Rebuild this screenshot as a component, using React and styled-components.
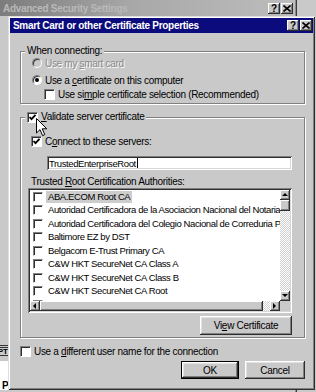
import React from 'react';
import styled, { createGlobalStyle } from 'styled-components';

const FACE = '#c9c9c9';

const GlobalStyle = createGlobalStyle`
  html, body {
    margin: 0;
    padding: 0;
  }

  body {
    width: 316px;
    height: 392px;
    overflow: hidden;
    background: ${FACE};
    font-family: "Liberation Sans", Arial, sans-serif;
    font-size: 10px;
    letter-spacing: -0.3px;
    color: #000;
  }
`;

const authorities = [
  'ABA.ECOM Root CA',
  'Autoridad Certificadora de la Asociacion Nacional del Notariado Mexicano',
  'Autoridad Certificadora del Colegio Nacional de Correduria Publica Mexicana',
  'Baltimore EZ by DST',
  'Belgacom E-Trust Primary CA',
  'C&W HKT SecureNet CA Class A',
  'C&W HKT SecureNet CA Class B',
  'C&W HKT SecureNet CA Root',
  'C&W HKT SecureNet CA SGC Root',
];

const CloseGlyph = () => (
  <svg width="8" height="7" viewBox="0 0 8 7">
    <path d="M0.5 0.5 L7.5 6.5 M7.5 0.5 L0.5 6.5" stroke="#000" strokeWidth="1.6" />
  </svg>
);

const Arrow = ({ dir }) => {
  const shapes = {
    up: '1,5 4,2 7,5',
    down: '1,2 4,5 7,2',
    left: '5,1 2,4 5,7',
    right: '2,1 5,4 2,7',
  };
  return (
    <svg width="8" height="8" viewBox="0 0 8 8">
      <polygon points={shapes[dir]} fill="#000" />
    </svg>
  );
};

const Check = () => (
  <svg width="9" height="9" viewBox="0 0 9 9">
    <path d="M1.5 4 L3.5 6.2 L7.5 1.8" stroke="#000" strokeWidth="1.8" fill="none" />
  </svg>
);

const App = () => {
  return (
    <Screen>
      <GlobalStyle />

      <BackWindow>
        <BackTitle>
          <span>Advanced Security Settings</span>
          <TitleButtons>
            <TitleButton>?</TitleButton>
            <TitleButton><CloseGlyph /></TitleButton>
          </TitleButtons>
        </BackTitle>
        <BackBody>
          <BackTab>PT</BackTab>
          <BackField>P</BackField>
        </BackBody>
      </BackWindow>

      <Dialog>
        <TitleBar>
          <span>Smart Card or other Certificate Properties</span>
          <TitleButtons>
            <TitleButton>?</TitleButton>
            <TitleButton><CloseGlyph /></TitleButton>
          </TitleButtons>
        </TitleBar>

        <Body>
          <Group $pad="0 12px 3px 10px">
            <Caption>When connecting:</Caption>
            <Row $indent={1}>
              <Radio $disabled />
              <Disabled>Use my <u>s</u>mart card</Disabled>
            </Row>
            <Row $indent={1} $top={5}>
              <Radio $checked />
              <span>Use a <u>c</u>ertificate on this computer</span>
            </Row>
            <Row $indent={13} $top={2}>
              <CheckBox />
              <span>Use si<u>m</u>ple certificate selection (Recommended)</span>
            </Row>
          </Group>

          <Group $pad="0 12px 2px 10px" $top={7}>
            <Caption>
              <CheckBox $checked><Check /></CheckBox>
              <span><u>V</u>alidate server certificate</span>
            </Caption>
            <Row $top={12}>
              <CheckBox $checked><Check /></CheckBox>
              <span>C<u>o</u>nnect to these servers:</span>
            </Row>
            <ServerInput>TrustedEnterpriseRoot<Caret /></ServerInput>
            <Row $top={5}>
              <span>Trusted <u>R</u>oot Certification Authorities:</span>
            </Row>

            <ListBox>
              <Items>
                {authorities.map((name, i) => (
                  <Item key={name}>
                    <CheckBox $small />
                    <ItemText $selected={i === 0}>{name}</ItemText>
                  </Item>
                ))}
              </Items>
              <VScroll>
                <ScrollButton><Arrow dir="up" /></ScrollButton>
                <Thumb $size={11} />
                <Track />
                <ScrollButton><Arrow dir="down" /></ScrollButton>
              </VScroll>
              <HScroll>
                <ScrollButton><Arrow dir="left" /></ScrollButton>
                <Thumb $size={223} />
                <Track />
                <ScrollButton><Arrow dir="right" /></ScrollButton>
              </HScroll>
              <Corner />
            </ListBox>

            <ButtonRow $top={3} $gap={0}>
              <Button $width={92} $height={19}>Vi<u>e</u>w Certificate</Button>
            </ButtonRow>
          </Group>

          <Row $indent={0} $top={7}>
            <CheckBox />
            <span>Use a <u>d</u>ifferent user name for the connection</span>
          </Row>

          <ButtonRow $top={4} $gap={6}>
            <Button $default $width={58} $height={18}>OK</Button>
            <Button $width={60} $height={18}>Cancel</Button>
          </ButtonRow>
        </Body>
      </Dialog>

      <Pointer width="12" height="20" viewBox="0 0 12 20">
        <path
          d="M0.5 0.5 L0.5 15 L4 11.6 L6.6 17.6 L8.8 16.6 L6.2 10.8 L10.8 10.8 Z"
          fill="#fff"
          stroke="#000"
          strokeWidth="1"
          strokeLinejoin="miter"
        />
      </Pointer>
    </Screen>
  );
};

const Screen = styled.div`
  position: relative;
  width: 316px;
  height: 392px;
  overflow: hidden;
  background: ${FACE};
`;

const BackWindow = styled.div`
  width: 297px;
  height: 392px;
  display: flex;
  flex-direction: column;
  background: ${FACE};
  box-shadow: inset -1px 0 #3c3c3c, inset -2px 0 #8a8a8a;
`;

const BackTitle = styled.div`
  height: 16px;
  margin-right: 2px;
  padding: 0 2px 0 3px;
  display: flex;
  align-items: center;
  justify-content: space-between;
  background: linear-gradient(to right, #7c7c7c, #a8a8a8 45%, #bdbdbd);
  color: #b9b9b9;
  font-weight: bold;
`;

const BackBody = styled.div`
  flex: 1;
  display: flex;
  flex-direction: column;
  justify-content: flex-end;
  padding-bottom: 2px;
`;

const BackTab = styled.div`
  width: 8px;
  margin-bottom: 5px;
  overflow: hidden;
  direction: rtl;
  border-top: 3px double #333;
  border-bottom: 1px solid #333;
  font-size: 8px;
  font-weight: bold;
  line-height: 7px;
  letter-spacing: 0;
`;

const BackField = styled.div`
  width: 20px;
  height: 29px;
  padding: 0 0 0 2px;
  display: flex;
  align-items: flex-end;
  background: #fff;
  font-weight: bold;
  font-size: 10px;
  line-height: 9px;
`;

const Dialog = styled.div`
  position: absolute;
  left: 8px;
  top: 16px;
  width: 307px;
  height: 374px;
  box-sizing: border-box;
  padding: 2px;
  display: flex;
  flex-direction: column;
  background: ${FACE};
  box-shadow:
    inset 1px 1px #dedede,
    inset -1px -1px #2e2e2e,
    inset 2px 2px #fff,
    inset -2px -2px #808080;
`;

const TitleBar = styled.div`
  height: 15px;
  padding: 0 1px 0 3px;
  display: flex;
  align-items: center;
  justify-content: space-between;
  background: #0b0b7d;
  color: #fff;
  font-weight: bold;
`;

const TitleButtons = styled.div`
  display: flex;
  gap: 1px;
`;

const TitleButton = styled.div`
  width: 12px;
  height: 11px;
  display: flex;
  align-items: center;
  justify-content: center;
  background: ${FACE};
  color: #000;
  font-size: 10px;
  font-weight: bold;
  letter-spacing: 0;
  box-shadow:
    inset -1px -1px #2e2e2e,
    inset 1px 1px #fff,
    inset -2px -2px #808080;
`;

const Body = styled.div`
  flex: 1;
  padding: 12px 8px 0 10px;
  display: flex;
  flex-direction: column;
`;

const Group = styled.fieldset`
  margin: ${(p) => p.$top || 0}px 0 0 0;
  padding: ${(p) => p.$pad};
  min-width: 0;
  display: flex;
  flex-direction: column;
  border: 1px solid #808080;
  box-shadow: 1px 1px 0 #fff, inset 1px 1px 0 #fff;
`;

const Caption = styled.legend`
  margin-left: -6px;
  padding: 0 2px;
  height: 12px;
  display: flex;
  align-items: center;
  gap: 3px;
  background: ${FACE};
  line-height: 12px;
`;

const Row = styled.div`
  height: 12px;
  margin-top: ${(p) => p.$top || 0}px;
  padding-left: ${(p) => p.$indent || 0}px;
  display: flex;
  align-items: center;
  gap: 3px;
  white-space: nowrap;
`;

const Disabled = styled.span`
  color: #8a8a8a;
  text-shadow: 1px 1px 0 #fff;
`;

const Radio = styled.div`
  position: relative;
  width: 10px;
  height: 10px;
  box-sizing: border-box;
  flex-shrink: 0;
  border-radius: 50%;
  border: 1px solid;
  border-color: #808080 #fff #fff #808080;
  background: ${(p) => (p.$disabled ? FACE : '#fff')};
  box-shadow: inset 1px 1px 0 #3a3a3a;

  &::after {
    content: '';
    display: ${(p) => (p.$checked ? 'block' : 'none')};
    position: absolute;
    left: 2px;
    top: 2px;
    width: 4px;
    height: 4px;
    border-radius: 50%;
    background: #000;
  }
`;

const CheckBox = styled.div`
  width: ${(p) => (p.$small ? 10 : 11)}px;
  height: ${(p) => (p.$small ? 10 : 11)}px;
  box-sizing: border-box;
  flex-shrink: 0;
  display: flex;
  align-items: center;
  justify-content: center;
  background: #fff;
  border: 1px solid;
  border-color: #808080 #fff #fff #808080;
  box-shadow: inset 1px 1px 0 #2e2e2e;
`;

const ServerInput = styled.div`
  height: 14px;
  margin: 9px 0 0 16px;
  padding: 0 2px;
  box-sizing: border-box;
  display: flex;
  align-items: center;
  background: #fff;
  font-size: 9.5px;
  letter-spacing: -0.4px;
  box-shadow:
    inset 1px 1px #808080,
    inset -1px -1px #fff,
    inset 2px 2px #2e2e2e,
    inset -2px -2px #d8d8d8;
`;

const Caret = styled.span`
  width: 1px;
  height: 10px;
  margin-left: 1px;
  background: #000;
`;

const ListBox = styled.div`
  height: 125px;
  margin: 1px 0 0 -3px;
  padding: 2px;
  box-sizing: border-box;
  display: grid;
  grid-template-columns: 1fr 10px;
  grid-template-rows: 1fr 10px;
  background: #fff;
  box-shadow:
    inset 1px 1px #808080,
    inset -1px -1px #fff,
    inset 2px 2px #2e2e2e,
    inset -2px -2px #d8d8d8;
`;

const Items = styled.div`
  overflow: hidden;
  padding: 0 0 0 3px;
  font-size: 9.5px;
  letter-spacing: -0.4px;
`;

const Item = styled.div`
  height: 13.5px;
  display: flex;
  align-items: center;
  gap: 3px;
  white-space: nowrap;
`;

const ItemText = styled.span`
  padding: 1px 2px;
  line-height: 10px;
  background: ${(p) => (p.$selected ? '#cdcdcd' : 'transparent')};
`;

const ScrollStack = styled.div`
  display: flex;
  background: ${FACE};
`;

const VScroll = styled(ScrollStack)`
  flex-direction: column;
`;

const HScroll = styled(ScrollStack)`
  flex-direction: row;
`;

const ScrollButton = styled.div`
  width: 10px;
  height: 10px;
  flex-shrink: 0;
  display: flex;
  align-items: center;
  justify-content: center;
  background: ${FACE};
  box-shadow:
    inset -1px -1px #2e2e2e,
    inset 1px 1px #fff,
    inset -2px -2px #808080;
`;

const Thumb = styled(ScrollButton)`
  flex: 0 0 ${(p) => p.$size}px;
  width: auto;
  height: auto;
`;

const Track = styled.div`
  flex: 1;
  background: repeating-conic-gradient(#fff 0 25%, #d0d0d0 0 50%) 0 0 / 2px 2px;
`;

const Corner = styled.div`
  background: ${FACE};
`;

const ButtonRow = styled.div`
  margin-top: ${(p) => p.$top}px;
  display: flex;
  justify-content: flex-end;
  gap: ${(p) => p.$gap}px;
`;

const Button = styled.div`
  width: ${(p) => p.$width}px;
  height: ${(p) => p.$height}px;
  box-sizing: border-box;
  display: flex;
  align-items: center;
  justify-content: center;
  background: ${FACE};
  border: ${(p) => (p.$default ? '1px solid #000' : 'none')};
  box-shadow:
    inset -1px -1px #2e2e2e,
    inset 1px 1px #fff,
    inset -2px -2px #808080,
    inset 2px 2px #e2e2e2;
`;

const Pointer = styled.svg`
  position: absolute;
  left: 36px;
  top: 118px;
`;

export default App;
